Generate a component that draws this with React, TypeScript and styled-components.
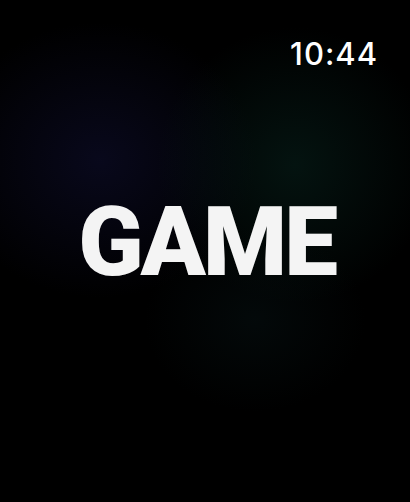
import React from 'react';
import styled, { createGlobalStyle } from 'styled-components';

const GlobalStyle = createGlobalStyle`
  html, body {
    margin: 0;
    padding: 0;
    background: #000;
  }
  * {
    box-sizing: border-box;
  }
`;

const Screen = styled.div`
  position: relative;
  width: 410px;
  height: 502px;
  overflow: hidden;
  background-color: #000;
  display: flex;
  flex-direction: column;
  font-family: Inter, 'Noto Sans', sans-serif;
`;

const Glow = styled.div<{ x: number; y: number; w: number; h: number; color: string }>`
  position: absolute;
  left: ${props => props.x - props.w / 2}px;
  top: ${props => props.y - props.h / 2}px;
  width: ${props => props.w}px;
  height: ${props => props.h}px;
  border-radius: 50%;
  background: radial-gradient(ellipse, ${props => props.color} 0%, transparent 65%);
  pointer-events: none;
`;

const StatusBar = styled.div`
  position: relative;
  display: flex;
  justify-content: flex-end;
  padding: 36px 32px 0 0;
`;

const Clock = styled.span`
  color: #fff;
  font-size: 31px;
  font-weight: 500;
  letter-spacing: 1px;
  line-height: 36px;
`;

const Center = styled.div`
  position: relative;
  flex: 1;
  display: flex;
  align-items: center;
  justify-content: center;
  padding-bottom: 90px;
`;

const Title = styled.h1`
  margin: 0;
  padding-left: 3px;
  color: #f4f4f4;
  font-family: Roboto, 'Noto Sans', sans-serif;
  font-size: 96px;
  font-weight: 900;
  letter-spacing: -3px;
  line-height: 1;
`;

export default function App() {
  return (
    <>
      <GlobalStyle />
      <Screen>
        <Glow x={100} y={160} w={340} h={300} color='rgba(14, 14, 46, 0.6)' />
        <Glow x={295} y={165} w={300} h={300} color='rgba(8, 38, 32, 0.5)' />
        <Glow x={255} y={320} w={240} h={200} color='rgba(8, 22, 24, 0.4)' />
        <StatusBar>
          <Clock>10:44</Clock>
        </StatusBar>
        <Center>
          <Title>GAME</Title>
        </Center>
      </Screen>
    </>
  );
}
